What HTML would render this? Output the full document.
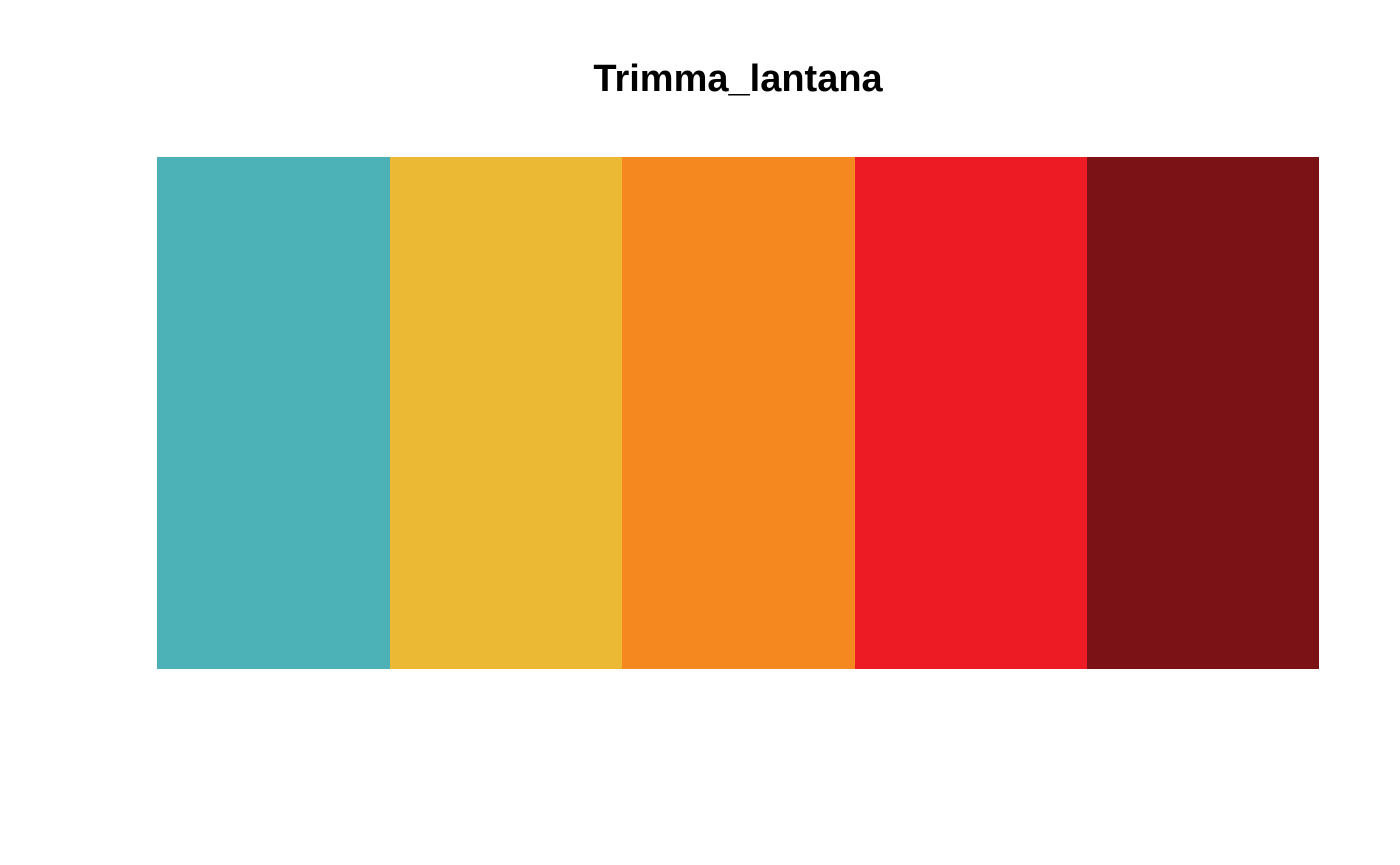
<!DOCTYPE html>
<html><head><style>
body{margin:0;width:1400px;height:865px;background:#fff;position:relative;overflow:hidden}
.t{position:absolute;left:0;width:1476px;top:58px;text-align:center;font:bold 38px "Liberation Sans",sans-serif;color:#000}
.b{position:absolute;top:157px;height:512px}
</style></head><body>
<div class="t">Trimma_lantana</div>
<div class="b" style="left:157px;width:233px;background:#4CB2B8"></div>
<div class="b" style="left:390px;width:232px;background:#ECB935"></div>
<div class="b" style="left:622px;width:233px;background:#F5891F"></div>
<div class="b" style="left:855px;width:232px;background:#ED1C24"></div>
<div class="b" style="left:1087px;width:232px;background:#7A1216"></div>
</body></html>
